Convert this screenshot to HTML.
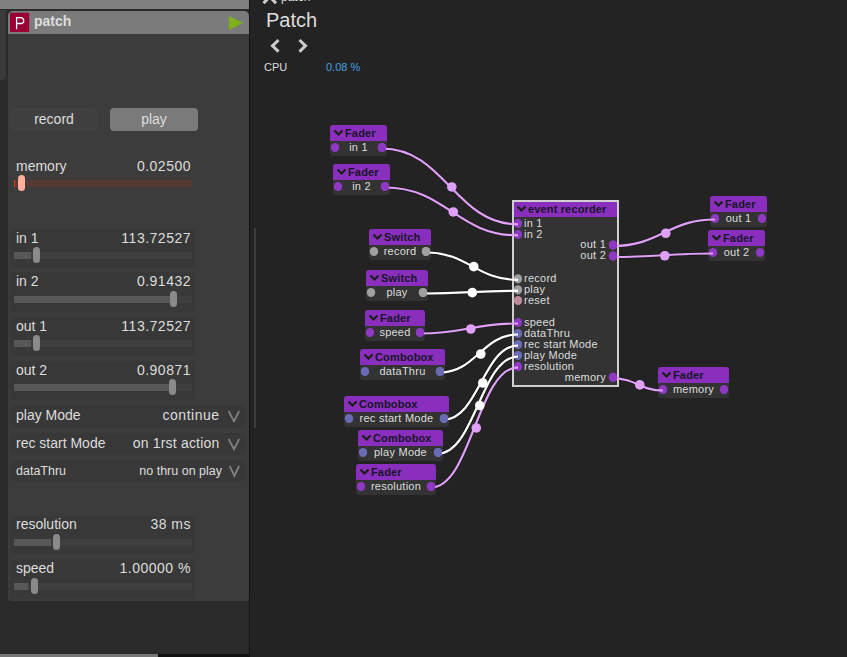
<!DOCTYPE html>
<html><head><meta charset="utf-8">
<style>
*{margin:0;padding:0;box-sizing:border-box}
html,body{width:847px;height:657px;overflow:hidden;background:#232323;font-family:"Liberation Sans",sans-serif}
.a{position:absolute}
#left{left:0;top:0;width:249px;height:657px;background:#2b2b2b}
#topbar{left:0;top:0;width:249px;height:9px;background:#808080}
#strip{left:0;top:10px;width:6px;height:70px;background:#3a3a3a;border-radius:0 0 4px 0}
#panel{left:8px;top:11px;width:241px;height:590px;background:#3c3c3c;border-radius:5px 5px 3px 3px}
#phead{left:8px;top:11px;width:241px;height:22.5px;background:#7b7b7b;border-radius:5px 5px 0 0}
#picon{left:10px;top:13px;width:19px;height:19px;background:#990033;border-radius:2px;color:#fff;font-size:17px;line-height:19px;text-align:center}
#ptitle{left:34px;top:11px;font-size:14px;font-weight:bold;color:#ddd;line-height:20px}
#play{left:229px;top:16px;width:0;height:0;border-left:14px solid #80b01a;border-top:7px solid transparent;border-bottom:7px solid transparent}
.btn{height:23px;border-radius:4px;color:#ddd;font-size:14px;text-align:center;line-height:23px}
.box{background:#383838;border-radius:4px}
.lbl{color:#ddd;font-size:14px;line-height:16px}
.val{color:#ddd;font-size:14px;line-height:16px;text-align:right;letter-spacing:0.5px}
.trk{height:7px;background:#3f3f3f}
.fill{height:7px;background:#585858}
.thumb{width:7px;height:15.5px;background:#8a8a8a;border-radius:4px}
.chev{color:#888;font-size:15px}
.nt{font-size:11px;font-weight:bold;fill:#161628;letter-spacing:0.15px}
.nl{font-size:11px;fill:#dddddd;letter-spacing:0.25px}
</style></head><body>
<div id="left" class="a"></div>
<div id="topbar" class="a"></div>
<div id="strip" class="a"></div>
<div id="panel" class="a"></div>
<div id="phead" class="a"></div>
<svg class="a" style="left:0;top:0" width="40" height="40"><path d="M10 13.5 Q10 12.7 10.8 12.7 H28.4 Q29.2 12.7 29.2 13.5 V31.1 Q29.2 31.9 28.4 31.9 H10.8 Q10 31.9 10 31.1 Z" fill="#990033"/><path d="M16.6 29.3 V17.6 H21.6 L23.6 19.4 V22.1 L22 23.5 H17" fill="none" stroke="#fff" stroke-width="1.3"/></svg>
<div id="ptitle" class="a">patch</div>
<div id="play" class="a"></div>

<div class="a btn" style="left:10px;top:108px;width:88px;background:#404040">record</div>
<div class="a btn" style="left:110px;top:108px;width:88px;background:#7a7a7a">play</div>

<!-- memory -->
<div class="a lbl" style="left:16px;top:158px">memory</div>
<div class="a val" style="left:100px;top:158px;width:91px">0.02500</div>
<div class="a trk" style="left:14px;top:180px;width:178px;background:#553a33"></div>
<div class="a" style="left:14px;top:180px;width:1px;height:7px;background:#ff3a00"></div>
<div class="a thumb" style="left:18px;top:175px;background:#ffb09a"></div>

<!-- in 1 -->
<div class="a box" style="left:10px;top:229px;width:185px;height:39px"></div>
<div class="a lbl" style="left:16px;top:230px">in 1</div>
<div class="a val" style="left:100px;top:230px;width:91px">113.72527</div>
<div class="a trk" style="left:14px;top:252px;width:178px"></div>
<div class="a fill" style="left:14px;top:252px;width:17px"></div>
<div class="a thumb" style="left:33px;top:247px"></div>

<!-- in 2 -->
<div class="a box" style="left:10px;top:272px;width:185px;height:40px"></div>
<div class="a lbl" style="left:16px;top:273px">in 2</div>
<div class="a val" style="left:100px;top:273px;width:91px">0.91432</div>
<div class="a trk" style="left:14px;top:296px;width:178px"></div>
<div class="a fill" style="left:14px;top:296px;width:156px"></div>
<div class="a thumb" style="left:170px;top:291px"></div>

<!-- out 1 -->
<div class="a box" style="left:10px;top:317px;width:185px;height:39px"></div>
<div class="a lbl" style="left:16px;top:318px">out 1</div>
<div class="a val" style="left:100px;top:318px;width:91px">113.72527</div>
<div class="a trk" style="left:14px;top:340px;width:178px"></div>
<div class="a fill" style="left:14px;top:340px;width:17px"></div>
<div class="a thumb" style="left:33px;top:335px"></div>

<!-- out 2 -->
<div class="a box" style="left:10px;top:361px;width:185px;height:39px"></div>
<div class="a lbl" style="left:16px;top:362px">out 2</div>
<div class="a val" style="left:100px;top:362px;width:91px">0.90871</div>
<div class="a trk" style="left:14px;top:384px;width:178px"></div>
<div class="a fill" style="left:14px;top:384px;width:155px"></div>
<div class="a thumb" style="left:169px;top:379px"></div>

<!-- combos -->
<div class="a box" style="left:10px;top:405px;width:236px;height:23px"></div>
<div class="a lbl" style="left:16px;top:407px">play Mode</div>
<div class="a val" style="left:100px;top:407px;width:119.5px">continue</div>
<div class="a box" style="left:10px;top:433px;width:236px;height:22px"></div>
<div class="a lbl" style="left:16px;top:435px">rec start Mode</div>
<div class="a val" style="left:100px;top:435px;width:119.5px;letter-spacing:0.2px">on 1rst action</div>
<div class="a box" style="left:10px;top:460px;width:236px;height:21px"></div>
<div class="a lbl" style="left:16px;top:463px;font-size:12.5px">dataThru</div>
<div class="a val" style="left:100px;top:463px;width:222px;font-size:12.5px;letter-spacing:0;left:0">no thru on play</div>

<svg class="a" style="left:0;top:0" width="250" height="500"><g fill="none" stroke="#808080" stroke-width="1.8"><path d="M228.6 411 L234 421.3 L239.2 411"/><path d="M228.6 439 L234 449.2 L239.2 439"/><path d="M229.6 466 L234.4 476 L239 466"/></g></svg>
<!-- resolution -->
<div class="a box" style="left:10px;top:516px;width:185px;height:38px"></div>
<div class="a lbl" style="left:16px;top:516px">resolution</div>
<div class="a val" style="left:100px;top:516px;width:91px">38 ms</div>
<div class="a trk" style="left:14px;top:539px;width:178px"></div>
<div class="a fill" style="left:14px;top:539px;width:37px"></div>
<div class="a thumb" style="left:53px;top:534px"></div>

<!-- speed -->
<div class="a box" style="left:10px;top:560px;width:185px;height:39px"></div>
<div class="a lbl" style="left:16px;top:560px">speed</div>
<div class="a val" style="left:100px;top:560px;width:91px">1.00000 %</div>
<div class="a trk" style="left:14px;top:583px;width:178px"></div>
<div class="a fill" style="left:14px;top:583px;width:14px"></div>
<div class="a thumb" style="left:31px;top:578px"></div>

<div class="a" style="left:0;top:654px;width:249px;height:3px;background:#111"></div>
<div class="a" style="left:0;top:654px;width:158px;height:3px;background:#777"></div>

<!-- right area -->
<div class="a" style="left:249px;top:0;width:1px;height:657px;background:#141414"></div>
<div class="a" style="left:254px;top:228px;width:2px;height:200px;background:#3c3c3c;border-radius:1px"></div>
<svg class="a" style="left:0;top:0" width="847" height="90">
<g stroke="#cccccc" stroke-width="2.4" fill="none"><g stroke-width="3"><path d="M263.5 3.2 L270 -3.5"/><path d="M276 3.2 L269.5 -3.5"/>
<path d="M278.5 40 L272.5 45.8 L278.5 51.6"/><path d="M299.5 40 L305.5 45.8 L299.5 51.6"/></g></g>
<text x="281" y="1.2" font-size="12" fill="#dddddd">patch</text>
<text x="266" y="27" font-size="20" fill="#dddddd">Patch</text>
<text x="264" y="71" font-size="11" fill="#dddddd">CPU</text>
<text x="326" y="71" font-size="11" fill="#44a0e0">0.08 %</text>
</svg>
<!--GRAPH--><svg class="a" style="left:0;top:0" width="847" height="657" viewBox="0 0 847 657">
<path d="M382 148.5 C444.56 148.5 455.44 224.4 518 224.4" fill="none" stroke="#151515" stroke-width="4" opacity="0.5"/>
<path d="M385 187.5 C446.18 187.5 456.82 235.4 518 235.4" fill="none" stroke="#151515" stroke-width="4" opacity="0.5"/>
<path d="M426 252.5 C468.32 252.5 475.68 279.8 518 279.8" fill="none" stroke="#151515" stroke-width="4" opacity="0.5"/>
<path d="M423 293.5 C466.7 293.5 474.3 290.8 518 290.8" fill="none" stroke="#151515" stroke-width="4" opacity="0.5"/>
<path d="M420 333.5 C465.08 333.5 472.92 323.5 518 323.5" fill="none" stroke="#151515" stroke-width="4" opacity="0.5"/>
<path d="M440 372.5 C475.88 372.5 482.12 334.5 518 334.5" fill="none" stroke="#151515" stroke-width="4" opacity="0.5"/>
<path d="M444 419.5 C478.04 419.5 483.96 345.5 518 345.5" fill="none" stroke="#151515" stroke-width="4" opacity="0.5"/>
<path d="M438 453.5 C474.8 453.5 481.2 356.5 518 356.5" fill="none" stroke="#151515" stroke-width="4" opacity="0.5"/>
<path d="M431 487.5 C471.02 487.5 477.98 367.4 518 367.4" fill="none" stroke="#151515" stroke-width="4" opacity="0.5"/>
<path d="M613 246.0 C659.92 246.0 668.08 219.5 715 219.5" fill="none" stroke="#151515" stroke-width="4" opacity="0.5"/>
<path d="M613 257.0 C659.0 257.0 667.0 253.5 713 253.5" fill="none" stroke="#151515" stroke-width="4" opacity="0.5"/>
<path d="M613 378.3 C636.0 378.3 640.0 390.5 663 390.5" fill="none" stroke="#151515" stroke-width="4" opacity="0.5"/>
<rect x="330" y="125" width="57" height="31" rx="3" fill="#333333"/>
<path d="M330 141 V128 Q330 125 333 125 H384 Q387 125 387 128 V141 Z" fill="#8a2fbd"/>
<path d="M334.5 130.5 L338.5 134.5 L342.5 130.5" fill="none" stroke="#182018" stroke-width="2.2"/>
<text x="345" y="137" class="nt">Fader</text>
<ellipse cx="335" cy="147.5" rx="4.2" ry="4.6" fill="#8f38c4"/>
<ellipse cx="382" cy="147.5" rx="4.2" ry="4.6" fill="#8f38c4"/>
<text x="358.5" y="150.8" class="nl" text-anchor="middle">in 1</text>
<rect x="333" y="164" width="57" height="31" rx="3" fill="#333333"/>
<path d="M333 180 V167 Q333 164 336 164 H387 Q390 164 390 167 V180 Z" fill="#8a2fbd"/>
<path d="M337.5 169.5 L341.5 173.5 L345.5 169.5" fill="none" stroke="#182018" stroke-width="2.2"/>
<text x="348" y="176" class="nt">Fader</text>
<ellipse cx="338" cy="186.5" rx="4.2" ry="4.6" fill="#8f38c4"/>
<ellipse cx="385" cy="186.5" rx="4.2" ry="4.6" fill="#8f38c4"/>
<text x="361.5" y="189.8" class="nl" text-anchor="middle">in 2</text>
<rect x="369" y="229" width="62" height="31" rx="3" fill="#333333"/>
<path d="M369 245 V232 Q369 229 372 229 H428 Q431 229 431 232 V245 Z" fill="#8a2fbd"/>
<path d="M373.5 234.5 L377.5 238.5 L381.5 234.5" fill="none" stroke="#182018" stroke-width="2.2"/>
<text x="384" y="241" class="nt">Switch</text>
<ellipse cx="374" cy="251.5" rx="4.2" ry="4.6" fill="#a0a0a0"/>
<ellipse cx="426" cy="251.5" rx="4.2" ry="4.6" fill="#a0a0a0"/>
<text x="400.0" y="254.8" class="nl" text-anchor="middle">record</text>
<rect x="366" y="270" width="62" height="31" rx="3" fill="#333333"/>
<path d="M366 286 V273 Q366 270 369 270 H425 Q428 270 428 273 V286 Z" fill="#8a2fbd"/>
<path d="M370.5 275.5 L374.5 279.5 L378.5 275.5" fill="none" stroke="#182018" stroke-width="2.2"/>
<text x="381" y="282" class="nt">Switch</text>
<ellipse cx="371" cy="292.5" rx="4.2" ry="4.6" fill="#a0a0a0"/>
<ellipse cx="423" cy="292.5" rx="4.2" ry="4.6" fill="#a0a0a0"/>
<text x="397.0" y="295.8" class="nl" text-anchor="middle">play</text>
<rect x="365" y="310" width="60" height="31" rx="3" fill="#333333"/>
<path d="M365 326 V313 Q365 310 368 310 H422 Q425 310 425 313 V326 Z" fill="#8a2fbd"/>
<path d="M369.5 315.5 L373.5 319.5 L377.5 315.5" fill="none" stroke="#182018" stroke-width="2.2"/>
<text x="380" y="322" class="nt">Fader</text>
<ellipse cx="370" cy="332.5" rx="4.2" ry="4.6" fill="#8f38c4"/>
<ellipse cx="420" cy="332.5" rx="4.2" ry="4.6" fill="#8f38c4"/>
<text x="395.0" y="335.8" class="nl" text-anchor="middle">speed</text>
<rect x="360" y="349" width="85" height="31" rx="3" fill="#333333"/>
<path d="M360 365 V352 Q360 349 363 349 H442 Q445 349 445 352 V365 Z" fill="#8a2fbd"/>
<path d="M364.5 354.5 L368.5 358.5 L372.5 354.5" fill="none" stroke="#182018" stroke-width="2.2"/>
<text x="375" y="361" class="nt">Combobox</text>
<ellipse cx="365" cy="371.5" rx="4.2" ry="4.6" fill="#6b6bb5"/>
<ellipse cx="440" cy="371.5" rx="4.2" ry="4.6" fill="#6b6bb5"/>
<text x="402.5" y="374.8" class="nl" text-anchor="middle">dataThru</text>
<rect x="344" y="396" width="105" height="31" rx="3" fill="#333333"/>
<path d="M344 412 V399 Q344 396 347 396 H446 Q449 396 449 399 V412 Z" fill="#8a2fbd"/>
<path d="M348.5 401.5 L352.5 405.5 L356.5 401.5" fill="none" stroke="#182018" stroke-width="2.2"/>
<text x="359" y="408" class="nt">Combobox</text>
<ellipse cx="349" cy="418.5" rx="4.2" ry="4.6" fill="#6b6bb5"/>
<ellipse cx="444" cy="418.5" rx="4.2" ry="4.6" fill="#6b6bb5"/>
<text x="396.5" y="421.8" class="nl" text-anchor="middle">rec start Mode</text>
<rect x="358" y="430" width="85" height="31" rx="3" fill="#333333"/>
<path d="M358 446 V433 Q358 430 361 430 H440 Q443 430 443 433 V446 Z" fill="#8a2fbd"/>
<path d="M362.5 435.5 L366.5 439.5 L370.5 435.5" fill="none" stroke="#182018" stroke-width="2.2"/>
<text x="373" y="442" class="nt">Combobox</text>
<ellipse cx="363" cy="452.5" rx="4.2" ry="4.6" fill="#6b6bb5"/>
<ellipse cx="438" cy="452.5" rx="4.2" ry="4.6" fill="#6b6bb5"/>
<text x="400.5" y="455.8" class="nl" text-anchor="middle">play Mode</text>
<rect x="356" y="464" width="80" height="31" rx="3" fill="#333333"/>
<path d="M356 480 V467 Q356 464 359 464 H433 Q436 464 436 467 V480 Z" fill="#8a2fbd"/>
<path d="M360.5 469.5 L364.5 473.5 L368.5 469.5" fill="none" stroke="#182018" stroke-width="2.2"/>
<text x="371" y="476" class="nt">Fader</text>
<ellipse cx="361" cy="486.5" rx="4.2" ry="4.6" fill="#8f38c4"/>
<ellipse cx="431" cy="486.5" rx="4.2" ry="4.6" fill="#8f38c4"/>
<text x="396.0" y="489.8" class="nl" text-anchor="middle">resolution</text>
<rect x="710" y="196" width="57" height="31" rx="3" fill="#333333"/>
<path d="M710 212 V199 Q710 196 713 196 H764 Q767 196 767 199 V212 Z" fill="#8a2fbd"/>
<path d="M714.5 201.5 L718.5 205.5 L722.5 201.5" fill="none" stroke="#182018" stroke-width="2.2"/>
<text x="725" y="208" class="nt">Fader</text>
<ellipse cx="715" cy="218.5" rx="4.2" ry="4.6" fill="#8f38c4"/>
<ellipse cx="762" cy="218.5" rx="4.2" ry="4.6" fill="#8f38c4"/>
<text x="738.5" y="221.8" class="nl" text-anchor="middle">out 1</text>
<rect x="708" y="230" width="57" height="31" rx="3" fill="#333333"/>
<path d="M708 246 V233 Q708 230 711 230 H762 Q765 230 765 233 V246 Z" fill="#8a2fbd"/>
<path d="M712.5 235.5 L716.5 239.5 L720.5 235.5" fill="none" stroke="#182018" stroke-width="2.2"/>
<text x="723" y="242" class="nt">Fader</text>
<ellipse cx="713" cy="252.5" rx="4.2" ry="4.6" fill="#8f38c4"/>
<ellipse cx="760" cy="252.5" rx="4.2" ry="4.6" fill="#8f38c4"/>
<text x="736.5" y="255.8" class="nl" text-anchor="middle">out 2</text>
<rect x="658" y="367" width="71" height="31" rx="3" fill="#333333"/>
<path d="M658 383 V370 Q658 367 661 367 H726 Q729 367 729 370 V383 Z" fill="#8a2fbd"/>
<path d="M662.5 372.5 L666.5 376.5 L670.5 372.5" fill="none" stroke="#182018" stroke-width="2.2"/>
<text x="673" y="379" class="nt">Fader</text>
<ellipse cx="663" cy="389.5" rx="4.2" ry="4.6" fill="#8f38c4"/>
<ellipse cx="724" cy="389.5" rx="4.2" ry="4.6" fill="#8f38c4"/>
<text x="693.5" y="392.8" class="nl" text-anchor="middle">memory</text>
<rect x="513" y="201" width="105" height="185" fill="#333333" stroke="#d0d0d0" stroke-width="2"/>
<rect x="514" y="202" width="103" height="15" fill="#8a2fbd"/>
<path d="M517.5 206.5 L521.5 210.5 L525.5 206.5" fill="none" stroke="#182018" stroke-width="2.2"/>
<text x="528" y="213" class="nt">event recorder</text>
<ellipse cx="518" cy="223.4" rx="4.2" ry="4.6" fill="#8f38c4"/>
<text x="524" y="226.70000000000002" class="nl">in 1</text>
<ellipse cx="518" cy="234.4" rx="4.2" ry="4.6" fill="#8f38c4"/>
<text x="524" y="237.70000000000002" class="nl">in 2</text>
<ellipse cx="518" cy="278.8" rx="4.2" ry="4.6" fill="#a0a0a0"/>
<text x="524" y="282.1" class="nl">record</text>
<ellipse cx="518" cy="289.8" rx="4.2" ry="4.6" fill="#a0a0a0"/>
<text x="524" y="293.1" class="nl">play</text>
<ellipse cx="518" cy="300.5" rx="4.2" ry="4.6" fill="#c08898"/>
<text x="524" y="303.8" class="nl">reset</text>
<ellipse cx="518" cy="322.5" rx="4.2" ry="4.6" fill="#8f38c4"/>
<text x="524" y="325.8" class="nl">speed</text>
<ellipse cx="518" cy="333.5" rx="4.2" ry="4.6" fill="#6b6bb5"/>
<text x="524" y="336.8" class="nl">dataThru</text>
<ellipse cx="518" cy="344.5" rx="4.2" ry="4.6" fill="#6b6bb5"/>
<text x="524" y="347.8" class="nl">rec start Mode</text>
<ellipse cx="518" cy="355.5" rx="4.2" ry="4.6" fill="#6b6bb5"/>
<text x="524" y="358.8" class="nl">play Mode</text>
<ellipse cx="518" cy="366.4" rx="4.2" ry="4.6" fill="#8f38c4"/>
<text x="524" y="369.7" class="nl">resolution</text>
<ellipse cx="613" cy="245" rx="4.2" ry="4.6" fill="#8f38c4"/>
<text x="606" y="248.3" class="nl" text-anchor="end">out 1</text>
<ellipse cx="613" cy="256" rx="4.2" ry="4.6" fill="#8f38c4"/>
<text x="606" y="259.3" class="nl" text-anchor="end">out 2</text>
<ellipse cx="613" cy="377.3" rx="4.2" ry="4.6" fill="#8f38c4"/>
<text x="606" y="380.6" class="nl" text-anchor="end">memory</text>
<path d="M382 148.5 C444.56 148.5 455.44 224.4 518 224.4" fill="none" stroke="#e0a0f8" stroke-width="2.2"/>
<path d="M385 187.5 C446.18 187.5 456.82 235.4 518 235.4" fill="none" stroke="#e0a0f8" stroke-width="2.2"/>
<path d="M426 252.5 C468.32 252.5 475.68 279.8 518 279.8" fill="none" stroke="#ffffff" stroke-width="2.2"/>
<path d="M423 293.5 C466.7 293.5 474.3 290.8 518 290.8" fill="none" stroke="#ffffff" stroke-width="2.2"/>
<path d="M420 333.5 C465.08 333.5 472.92 323.5 518 323.5" fill="none" stroke="#e0a0f8" stroke-width="2.2"/>
<path d="M440 372.5 C475.88 372.5 482.12 334.5 518 334.5" fill="none" stroke="#ffffff" stroke-width="2.2"/>
<path d="M444 419.5 C478.04 419.5 483.96 345.5 518 345.5" fill="none" stroke="#ffffff" stroke-width="2.2"/>
<path d="M438 453.5 C474.8 453.5 481.2 356.5 518 356.5" fill="none" stroke="#ffffff" stroke-width="2.2"/>
<path d="M431 487.5 C471.02 487.5 477.98 367.4 518 367.4" fill="none" stroke="#e0a0f8" stroke-width="2.2"/>
<path d="M613 246.0 C659.92 246.0 668.08 219.5 715 219.5" fill="none" stroke="#e0a0f8" stroke-width="2.2"/>
<path d="M613 257.0 C659.0 257.0 667.0 253.5 713 253.5" fill="none" stroke="#e0a0f8" stroke-width="2.2"/>
<path d="M613 378.3 C636.0 378.3 640.0 390.5 663 390.5" fill="none" stroke="#e0a0f8" stroke-width="2.2"/>
<ellipse cx="382" cy="147.5" rx="4.2" ry="4.6" fill="#8f38c4"/>
<ellipse cx="385" cy="186.5" rx="4.2" ry="4.6" fill="#8f38c4"/>
<ellipse cx="426" cy="251.5" rx="4.2" ry="4.6" fill="#a0a0a0"/>
<ellipse cx="423" cy="292.5" rx="4.2" ry="4.6" fill="#a0a0a0"/>
<ellipse cx="420" cy="332.5" rx="4.2" ry="4.6" fill="#8f38c4"/>
<ellipse cx="440" cy="371.5" rx="4.2" ry="4.6" fill="#6b6bb5"/>
<ellipse cx="444" cy="418.5" rx="4.2" ry="4.6" fill="#6b6bb5"/>
<ellipse cx="438" cy="452.5" rx="4.2" ry="4.6" fill="#6b6bb5"/>
<ellipse cx="431" cy="486.5" rx="4.2" ry="4.6" fill="#8f38c4"/>
<ellipse cx="613" cy="245" rx="4.2" ry="4.6" fill="#8f38c4"/>
<ellipse cx="613" cy="256" rx="4.2" ry="4.6" fill="#8f38c4"/>
<ellipse cx="613" cy="377.3" rx="4.2" ry="4.6" fill="#8f38c4"/>
<circle cx="451.8" cy="186.95" r="4.8" fill="#e0a0f8"/>
<circle cx="453.3" cy="211.95" r="4.8" fill="#e0a0f8"/>
<circle cx="473.8" cy="266.65" r="4.8" fill="#ffffff"/>
<circle cx="472.3" cy="292.65" r="4.8" fill="#ffffff"/>
<circle cx="470.8" cy="329.0" r="4.8" fill="#e0a0f8"/>
<circle cx="480.8" cy="354.0" r="4.8" fill="#ffffff"/>
<circle cx="482.8" cy="383.0" r="4.8" fill="#ffffff"/>
<circle cx="479.8" cy="405.5" r="4.8" fill="#ffffff"/>
<circle cx="476.3" cy="427.95" r="4.8" fill="#e0a0f8"/>
<circle cx="665.8" cy="233.25" r="4.8" fill="#e0a0f8"/>
<circle cx="664.8" cy="255.75" r="4.8" fill="#e0a0f8"/>
<circle cx="639.8" cy="384.9" r="4.8" fill="#e0a0f8"/>
</svg><!--/GRAPH-->
</body></html>
